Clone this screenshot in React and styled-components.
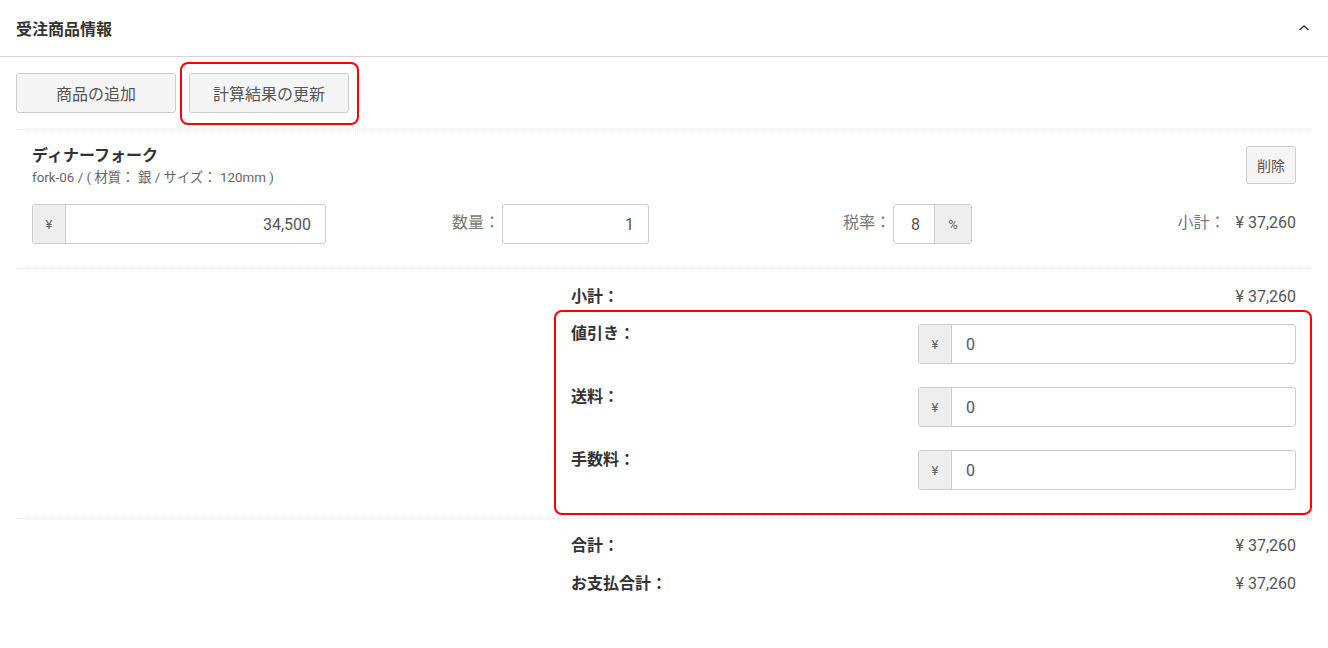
import React from "react";
import styled, { createGlobalStyle } from "styled-components";

const GlobalStyle = createGlobalStyle`
  body {
    margin: 0;
    background: #fff;
    font-family: Roboto, "Noto Sans CJK JP", sans-serif;
    color: #555;
  }
`;

const adjustments = [
  { label: "値引き：", value: "0" },
  { label: "送料：", value: "0" },
  { label: "手数料：", value: "0" },
];

const totals = [
  { label: "合計：", value: "¥ 37,260" },
  { label: "お支払合計：", value: "¥ 37,260" },
];

const App = () => {
  return (
    <Panel>
      <GlobalStyle />
      <Header>
        <Title>受注商品情報</Title>
        <svg width="12" height="8" viewBox="0 0 12 8">
          <polyline points="1.5,6 6,2 10.5,6" fill="none" stroke="#333" strokeWidth="1.4" />
        </svg>
      </Header>

      <Body>
        <Toolbar>
          <Button>商品の追加</Button>
          <Button $marked>計算結果の更新</Button>
        </Toolbar>

        {/* Product line */}
        <Product>
          <ProductHead>
            <div>
              <ProductName>ディナーフォーク</ProductName>
              <ProductMeta>fork-06 / ( 材質： 銀 / サイズ： 120mm )</ProductMeta>
            </div>
            <SmallButton>削除</SmallButton>
          </ProductHead>

          <Fields>
            <Cell>
              <InputGroup $width="294px">
                <Addon>¥</Addon>
                <Field $align="right">34,500</Field>
              </InputGroup>
            </Cell>
            <Cell $end $pad="15px">
              <FieldLabel>数量：</FieldLabel>
              <InputGroup $width="147px">
                <Field $align="right">1</Field>
              </InputGroup>
            </Cell>
            <Cell $end $pad="8px">
              <FieldLabel>税率：</FieldLabel>
              <InputGroup $width="79px">
                <Field $align="right">8</Field>
                <Addon $right $w="36px">%</Addon>
              </InputGroup>
            </Cell>
            <Cell $end>
              <FieldLabel>小計：</FieldLabel>
              <Amount>¥ 37,260</Amount>
            </Cell>
          </Fields>
        </Product>

        {/* Summary */}
        <Section $top="18px" $bottom="3px">
          <Column>
            <SumRow>
              <SumLabel>小計：</SumLabel>
              <SumValue>¥ 37,260</SumValue>
            </SumRow>
            <Marked>
              {adjustments.map((row) => (
                <AdjustRow key={row.label}>
                  <SumLabel>{row.label}</SumLabel>
                  <InputGroup $width="378px">
                    <Addon>¥</Addon>
                    <Field $align="left">{row.value}</Field>
                  </InputGroup>
                </AdjustRow>
              ))}
            </Marked>
          </Column>
        </Section>

        <Section $top="17px" $bottom="20px" $plain>
          <Column>
            {totals.map((row) => (
              <SumRow key={row.label} $gap="18px">
                <SumLabel>{row.label}</SumLabel>
                <SumValue>{row.value}</SumValue>
              </SumRow>
            ))}
          </Column>
        </Section>
      </Body>
    </Panel>
  );
};

export default App;

const Panel = styled.div`
  width: 1328px;
  background: #fff;
`;

const Header = styled.div`
  height: 56px;
  display: flex;
  align-items: center;
  justify-content: space-between;
  padding: 0 18px 0 16px;
  border-bottom: 1px solid #d6d6d6;
  box-sizing: content-box;
`;

const Title = styled.h2`
  margin: 0;
  font-size: 16px;
  font-weight: bold;
  color: #333;
`;

const Body = styled.div`
  padding: 0 16px;
`;

const Toolbar = styled.div`
  display: flex;
  gap: 13px;
  padding: 16px 0;
  border-bottom: 1px dotted #e2e2e2;
`;

const Button = styled.button`
  position: relative;
  width: 160px;
  height: 40px;
  background: #f5f5f5;
  border: 1px solid #ccc;
  border-radius: 3px;
  font-family: inherit;
  font-size: 16px;
  color: #555;
  cursor: pointer;

  ${(p) =>
    p.$marked &&
    `
    &::after {
      content: "";
      position: absolute;
      top: -12px;
      bottom: -13px;
      left: -10px;
      right: -11px;
      border: 2px solid #f00;
      border-radius: 8px;
      pointer-events: none;
    }
  `}
`;

const Product = styled.div`
  padding: 16px 16px 24px;
  border-bottom: 1px dotted #e2e2e2;
`;

const ProductHead = styled.div`
  display: flex;
  justify-content: space-between;
  align-items: flex-start;
`;

const ProductName = styled.div`
  font-size: 16px;
  line-height: 20px;
  font-weight: bold;
  color: #333;
`;

const ProductMeta = styled.div`
  margin-top: 3px;
  font-size: 13.4px;
  line-height: 18px;
  color: #666;
`;

const SmallButton = styled.button`
  width: 50px;
  height: 38px;
  background: #f5f5f5;
  border: 1px solid #ccc;
  border-radius: 3px;
  font-family: inherit;
  font-size: 14px;
  color: #555;
`;

const Fields = styled.div`
  margin-top: 17px;
  display: grid;
  grid-template-columns: repeat(4, 1fr);
`;

const Cell = styled.div`
  display: flex;
  align-items: center;
  justify-content: ${(p) => (p.$end ? "flex-end" : "flex-start")};
  padding-right: ${(p) => p.$pad || "0"};
`;

const FieldLabel = styled.span`
  font-size: 16px;
  line-height: 20px;
  color: #777;
  margin-right: 2px;
  padding-bottom: 3px;
`;

const Amount = styled.span`
  font-size: 16px;
  line-height: 20px;
  color: #555;
  margin-left: 8px;
  padding-bottom: 3px;
`;

const InputGroup = styled.div`
  display: flex;
  width: ${(p) => p.$width};
  height: 40px;
  border: 1px solid #ccc;
  border-radius: 3px;
  box-sizing: border-box;
  overflow: hidden;
  background: #fff;
`;

const Addon = styled.span`
  flex: 0 0 ${(p) => p.$w || "32px"};
  display: flex;
  align-items: center;
  justify-content: center;
  background: #eee;
  font-size: 13px;
  color: #666;
  ${(p) => (p.$right ? "border-left: 1px solid #ccc;" : "border-right: 1px solid #ccc;")}
`;

const Field = styled.span`
  flex: 1;
  display: flex;
  align-items: center;
  justify-content: ${(p) => (p.$align === "right" ? "flex-end" : "flex-start")};
  padding: 0 14px;
  font-size: 16px;
  color: #555;
`;

const Section = styled.div`
  padding: ${(p) => p.$top} 0 ${(p) => p.$bottom};
  border-bottom: ${(p) => (p.$plain ? "none" : "1px dotted #e2e2e2")};
`;

const Column = styled.div`
  margin-left: 540px;
  width: 756px;
`;

const SumRow = styled.div`
  display: flex;
  justify-content: space-between;
  align-items: center;
  padding: 0 16px 0 15px;
  line-height: 20px;
  & + & {
    margin-top: ${(p) => p.$gap || "0"};
  }
`;

const SumLabel = styled.span`
  font-size: 16px;
  line-height: 20px;
  font-weight: bold;
  color: #333;
`;

const SumValue = styled.span`
  font-size: 16px;
  color: #555;
`;

const Marked = styled.div`
  margin: 3px 0 0 -2px;
  padding: 12px 14px 0 15px;
  border: 2px solid #f00;
  border-radius: 8px;
`;

const AdjustRow = styled.div`
  display: flex;
  justify-content: space-between;
  align-items: flex-start;
  margin-bottom: 23px;
`;
